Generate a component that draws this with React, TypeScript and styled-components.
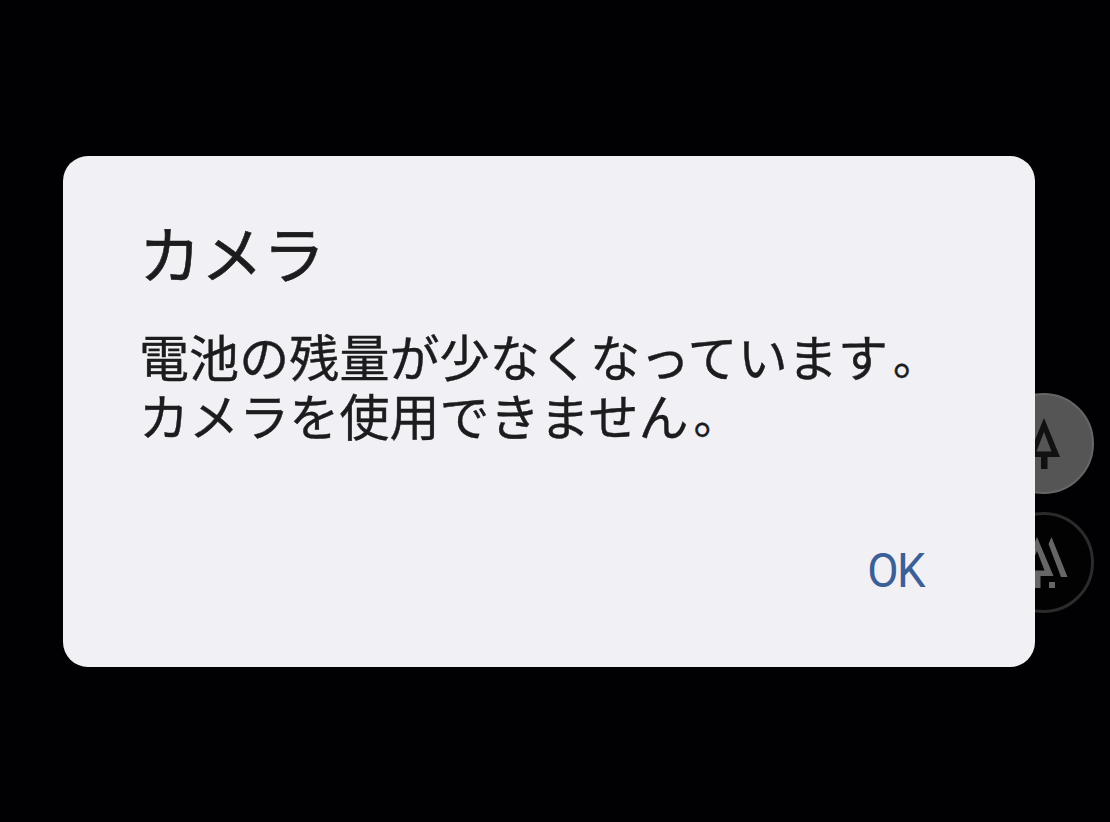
import styled, { createGlobalStyle } from "styled-components";

const GlobalStyle = createGlobalStyle`
    * {
        box-sizing: border-box;
    }

    body {
        margin: 0;
        background: #010103;
        font-family: "Noto Sans CJK JP", sans-serif;
    }
`;

const Screen = styled.main`
    position: relative;
    height: 822px;
    padding: 156px 75px 155px 63px;
    overflow: hidden;
    background: #010103;
`;

const LensControls = styled.div`
    position: absolute;
    top: 393px;
    right: 16px;
    display: flex;
    flex-direction: column;
    gap: 18px;
`;

const LensButton = styled.button<{ $active?: boolean }>`
    width: 101px;
    height: 101px;
    padding: 0;
    border: ${({ $active }) => ($active ? "2px solid #666666" : "3px solid #2b2b2b")};
    border-radius: 50%;
    background: ${({ $active }) => ($active ? "#555555" : "#020202")};

    svg {
        display: block;
        width: 95px;
        height: 95px;
        margin: 0 auto;
    }
`;

const Dialog = styled.section`
    position: relative;
    display: flex;
    flex-direction: column;
    height: 511px;
    padding: 56px 77px 60px 76px;
    border-radius: 25px;
    background: #f0f0f5;
    color: #1c1c1e;
`;

const DialogTitle = styled.h1`
    margin: 0 0 34px;
    font-size: 62px;
    font-weight: 400;
    line-height: 80px;
    -webkit-text-stroke: 0.6px currentColor;
`;

const DialogText = styled.p`
    margin: 0;
    font-size: 50px;
    font-weight: 400;
    line-height: 59px;
    letter-spacing: 0.1px;
    white-space: nowrap;
    -webkit-text-stroke: 0.4px currentColor;
`;

const FullStop = styled.span`
    margin-left: 5px;
    font-size: 45px;
    line-height: 1;
    vertical-align: 2px;
`;

const DialogActions = styled.div`
    display: flex;
    justify-content: flex-end;
    margin-top: auto;
`;

const DialogButton = styled.button`
    padding: 0 32px;
    border: 0;
    background: none;
    color: #3c5f96;
    font-family: Roboto, sans-serif;
    font-size: 49px;
    line-height: 72px;
    letter-spacing: -1.5px;
    transform: scaleX(0.93);
`;

const App = () => {
    return (
        <Screen>
            <GlobalStyle />
            <LensControls>
                <LensButton $active aria-label="Standard lens">
                    <svg viewBox="0 0 95 95" fill="#111">
                        <path fillRule="evenodd" d="M48 22L64 61H51.500V73H45V61H32ZM48 36L40.500 55.500H55.500Z" />
                    </svg>
                </LensButton>
                <LensButton aria-label="Wide lens">
                    <svg viewBox="0 0 95 95" fill="#666">
                        <path fillRule="evenodd" d="M41 22L57.500 61H44.500V73H38.500V61H25ZM41 36L33 55.500H48.500Z" />
                        <path d="M55.500 22L71.500 62H65L52.500 29ZM53 67H59V73H53Z" />
                    </svg>
                </LensButton>
            </LensControls>
            <Dialog role="dialog" aria-labelledby="dialog-title">
                <DialogTitle id="dialog-title">カメラ</DialogTitle>
                <DialogText>
                    電池の残量が少なくなっています<FullStop>。</FullStop><br />
                    カメラを使用できません<FullStop>。</FullStop>
                </DialogText>
                <DialogActions>
                    <DialogButton>OK</DialogButton>
                </DialogActions>
            </Dialog>
        </Screen>
    );
};

export default App;
